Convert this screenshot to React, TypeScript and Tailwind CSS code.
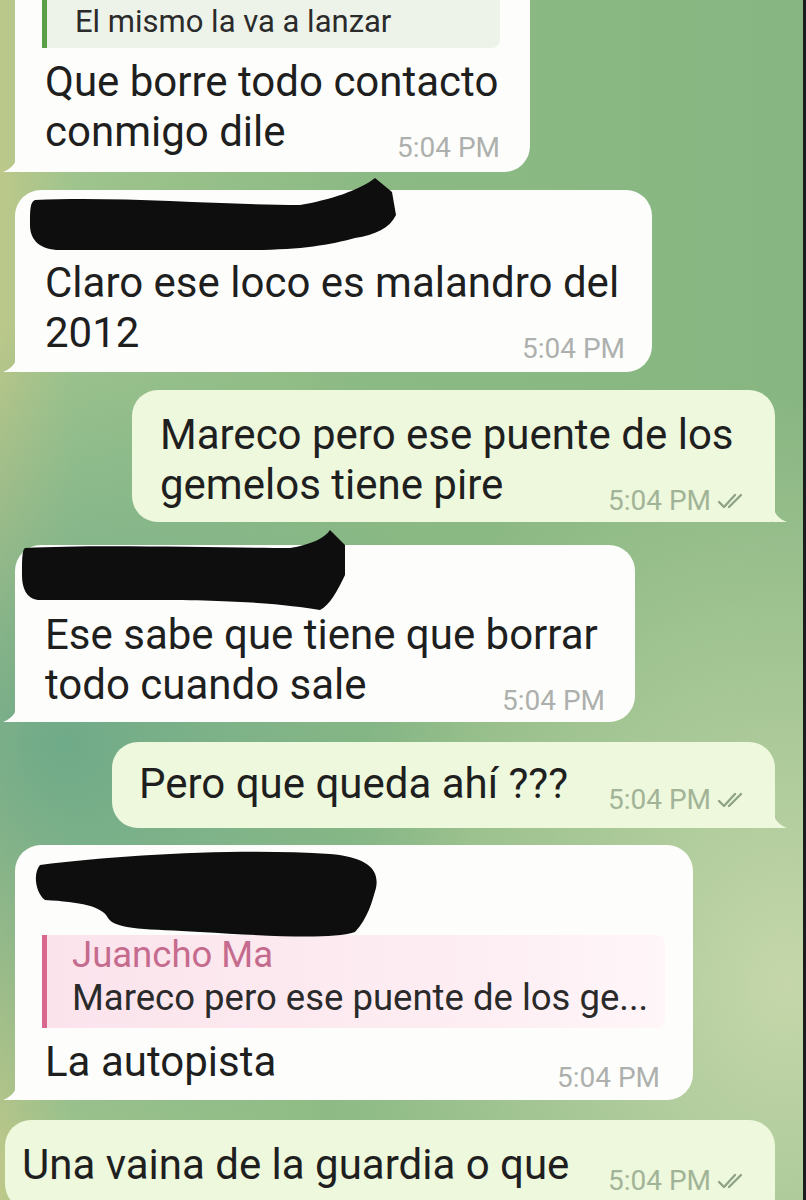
import React from 'react';

// blacked-out sender names, drawn as freehand marker strokes
const scribbles = {
  a: 'M15 30 C100 26 200 35 280 35 C310 30 340 20 355 8 L372 22 L376 45 C370 58 355 65 335 68 C310 75 280 80 230 80 L40 80 C20 80 10 70 10 55 C10 40 10 32 15 30 Z',
  b: 'M10 23 C85 19 205 23 275 23 C295 20 310 13 315 5 L330 20 L330 50 C323 65 315 80 305 85 C275 80 235 75 135 75 L25 75 C13 75 7 65 7 50 C7 35 7 25 10 23 Z',
  c: 'M10 25 C90 15 210 8 300 14 C335 17 350 28 346 48 C342 62 338 78 325 92 C300 100 240 96 170 92 C120 89 85 90 78 78 C72 66 50 62 15 60 C5 52 3 33 10 25 Z',
};

function Scribble({ d, className }: { d: string; className: string }) {
  return (
    <svg className={`pointer-events-none absolute ${className}`} viewBox="0 0 390 105" width="390" height="105">
      <path d={d} fill="#0e0e0e" />
    </svg>
  );
}

function DoubleCheck() {
  return (
    <svg width="30" height="18" viewBox="0 0 30 18" fill="none" stroke="#8fa487" strokeWidth="2.4" strokeLinecap="round" strokeLinejoin="round">
      <path d="M2 10l5 5L18 3" />
      <path d="M12 15L24 3" />
    </svg>
  );
}

function Time({ out }: { out?: boolean }) {
  return (
    <span
      className={`mb-[-6px] flex shrink-0 items-center gap-[6px] whitespace-nowrap text-[28px] leading-[30px] ${
        out ? 'text-[#a2b497]' : 'text-[#adb0ad]'
      }`}
    >
      5:04 PM
      {out && <DoubleCheck />}
    </span>
  );
}

function Tail({ out }: { out?: boolean }) {
  if (out) {
    return (
      <svg className="absolute bottom-0 right-[-12px]" width="14" height="20" viewBox="0 0 14 20">
        <path d="M0 0 C0 10 4 16 14 20 L0 20 Z" fill="#eef8dd" />
      </svg>
    );
  }
  return (
    <svg className="absolute bottom-0 left-[-12px]" width="14" height="20" viewBox="0 0 14 20">
      <path d="M14 0 C14 10 10 16 0 20 L14 20 Z" fill="#fdfefc" />
    </svg>
  );
}

function Bubble({ out, className, children }: { out?: boolean; className: string; children: React.ReactNode }) {
  return (
    <div
      className={`relative rounded-[26px] ${
        out ? 'rounded-br-[4px] bg-[#eef8dd]' : 'rounded-bl-[4px] bg-[#fdfefc]'
      } ${className}`}
    >
      {children}
      <Tail out={out} />
    </div>
  );
}

function LastLine({ text, out, className = '' }: { text: string; out?: boolean; className?: string }) {
  return (
    <div className={`flex items-end justify-between gap-[14px] ${className}`}>
      <span className="whitespace-nowrap">{text}</span>
      <Time out={out} />
    </div>
  );
}

export default function App() {
  return (
    <div
      className="flex h-[1200px] w-[806px] flex-col overflow-hidden border-r-[3px] border-[#1c1c1c]
                 bg-[radial-gradient(ellipse_at_8%_62%,#6faa88_0%,transparent_40%),radial-gradient(ellipse_at_98%_82%,#c5d7aa_0%,transparent_42%),linear-gradient(90deg,#bcc88a_0%,#9fc48d_9%,#8cba84_45%,#88b682_100%)]
                 font-['Roboto','Liberation_Sans',sans-serif] text-[42px] leading-[50px] text-[#1e1f1e]"
    >
      <Bubble className="ml-[15px] mt-[-30px] w-[515px] pb-[15px] pl-[27px] pr-[30px] pt-[8px]">
        <div className="rounded-r-[8px] border-l-[5px] border-[#5a9e48] bg-[#eef3ea] pb-[6px] pl-[28px] pt-[24px] text-[31px] leading-[40px] text-[#2a2b2a]">
          El mismo la va a lanzar
        </div>
        <div className="mt-[9px] pl-[3px]">
          <div className="whitespace-nowrap">Que borre todo contacto</div>
          <LastLine text="conmigo dile" />
        </div>
      </Bubble>

      <Bubble className="ml-[15px] mt-[18px] w-[637px] pb-[14px] pl-[30px] pr-[27px] pt-[68px]">
        <Scribble d={scribbles.a} className="left-[5px] top-[-20px]" />
        <div className="whitespace-nowrap">Claro ese loco es malandro del</div>
        <LastLine text="2012" />
      </Bubble>

      <Bubble out className="ml-auto mr-[28px] mt-[18px] w-[643px] pb-[12px] pl-[28px] pr-[28px] pt-[20px]">
        <div className="whitespace-nowrap">Mareco pero ese puente de los</div>
        <LastLine out text="gemelos tiene pire" />
      </Bubble>

      <Bubble className="ml-[15px] mt-[23px] w-[620px] pb-[12px] pl-[30px] pr-[30px] pt-[65px]">
        <Scribble d={scribbles.b} className="left-0 top-[-20px]" />
        <div className="whitespace-nowrap">Ese sabe que tiene que borrar</div>
        <LastLine text="todo cuando sale" />
      </Bubble>

      <Bubble out className="ml-auto mr-[28px] mt-[20px] w-[663px] pb-[19px] pl-[27px] pr-[28px] pt-[17px]">
        <LastLine out text="Pero que queda ahí ???" />
      </Bubble>

      <Bubble className="ml-[15px] mt-[17px] w-[678px] pb-[13px] pl-[27px] pr-[28px] pt-[90px]">
        <Scribble d={scribbles.c} className="left-[15px] top-[-5px]" />
        <div className="rounded-r-[8px] border-l-[5px] border-[#d8678f] bg-[linear-gradient(90deg,#fbe3ec_0%,#fdeef3_70%,#fff6f9_100%)] pb-[8px] pl-[25px] text-[36.5px]">
          <div className="leading-[40px] text-[#c56b8d]">Juancho Ma</div>
          <div className="whitespace-nowrap leading-[45px] text-[#2a2a2a]">Mareco pero ese puente de los ge...</div>
        </div>
        <LastLine text="La autopista" className="mt-[9px] pl-[3px] pr-[5px]" />
      </Bubble>

      <Bubble out className="ml-[5px] mr-[28px] mt-[20px] pb-[20px] pl-[17px] pr-[28px] pt-[20px]">
        <LastLine out text="Una vaina de la guardia o que" />
      </Bubble>
    </div>
  );
}
